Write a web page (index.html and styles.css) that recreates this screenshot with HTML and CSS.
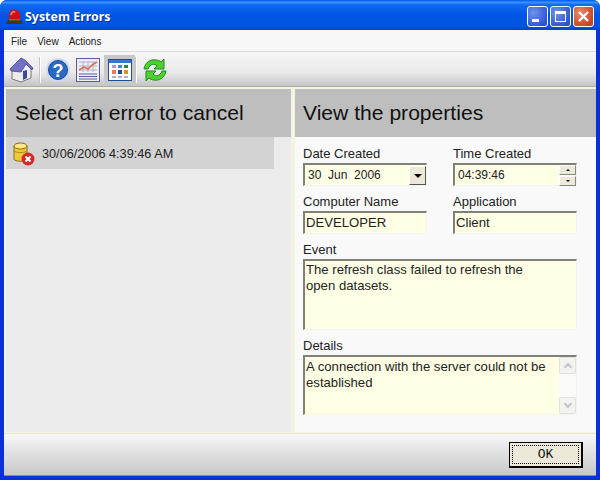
FILE: index.html
```html
<!DOCTYPE html>
<html lang="en">
<head>
    <meta charset="UTF-8">
    <meta name="viewport" content="width=device-width, initial-scale=1.0">
    <title>System Errors</title>
    <link rel="stylesheet" href="styles.css">
</head>
<body>

    <div class="window">
        <div class="titlebar">
            <svg class="title-icon" width="17" height="16" viewBox="0 0 17 16">
                <path d="M3 11V6a5.500 5.500 0 0 1 11 0v5z" fill="#d80c0c"/>
                <path d="M5 6a3 3 0 0 1 4-3" fill="none" stroke="#f88" stroke-width="1.5"/>
                <path d="M0 15l2-4h13l2 4z" fill="#3e3a1c"/>
                <rect x="3" y="10" width="11" height="1.500" fill="#7a7030"/>
            </svg>
            <span class="title-text">System Errors</span>
            <div class="title-buttons">
                <div class="win-btn"><span class="min-glyph"></span></div>
                <div class="win-btn"><span class="max-glyph"></span></div>
                <div class="win-btn close">
                    <svg width="13" height="13" viewBox="0 0 13 13"><path d="M2 2l9 9M11 2l-9 9" stroke="#fff" stroke-width="2.4"/></svg>
                </div>
            </div>
        </div>

        <div class="client">
            <div class="menubar">
                <span>File</span>
                <span>View</span>
                <span>Actions</span>
            </div>

            <div class="toolbar">
                <div class="tool home">
                    <svg width="26" height="26" viewBox="0 0 26 26">
                        <path d="M3 13v9l9 3 10-4V12l-6-6z" fill="#ececee" stroke="#77777c"/>
                        <path d="M12 1L1 12l1 2 10 1 5-8 6 6 1-2-8-8z" fill="#7470c4" stroke="#4a4590" stroke-width="0.8"/>
                        <path d="M14 23v-9l4-1v8z" fill="#3c4a98"/>
                    </svg>
                </div>
                <div class="tool-sep"></div>
                <div class="tool help">
                    <svg width="26" height="26" viewBox="0 0 26 26">
                        <circle cx="13" cy="13" r="12" fill="#cfd9f2"/>
                        <circle cx="13" cy="13" r="9.500" fill="#2a68c8" stroke="#1c4c9c"/>
                        <text x="13" y="19.500" text-anchor="middle" class="help-mark">?</text>
                    </svg>
                </div>
                <div class="tool chart">
                    <svg width="24" height="24" viewBox="0 0 24 24">
                        <rect x="0.5" y="0.5" width="23" height="23" fill="#eeeefa" stroke="#5a5a98"/>
                        <path d="M3 4h18M3 8h18M3 12h18M7 3v11M12 3v11M17 3v11" stroke="#b4b4cc"/>
                        <path d="M3 12l5-3 4 2 4-4 5-3" fill="none" stroke="#e06840" stroke-width="1.5"/>
                        <path d="M3 16h18M3 18.500h18M3 21h18" stroke="#5a5a98"/>
                    </svg>
                </div>
                <div class="tool grid-tool">
                    <svg width="24" height="22" viewBox="0 0 24 22">
                        <rect x="0.5" y="0.5" width="23" height="21" fill="#fff" stroke="#1e4c9c"/>
                        <rect x="1" y="1" width="22" height="3" fill="#3a78d0"/>
                        <rect x="4" y="6" width="4" height="3" fill="#a0a0d0"/>
                        <rect x="10" y="6" width="4" height="3" fill="#2a90e0"/>
                        <rect x="16" y="6" width="4" height="3" fill="#109040"/>
                        <rect x="4" y="11" width="4" height="4" fill="#f07850"/>
                        <rect x="10" y="11" width="4" height="4" fill="#1c4c9c"/>
                        <rect x="16" y="11" width="4" height="4" fill="#d09a10"/>
                        <rect x="4" y="17" width="4" height="2" fill="#b0b0c8"/>
                        <rect x="10" y="17" width="4" height="2" fill="#b0b0c8"/>
                        <rect x="16" y="17" width="4" height="2" fill="#b0b0c8"/>
                    </svg>
                </div>
                <div class="tool-sep"></div>
                <div class="tool refresh">
                    <svg width="26" height="26" viewBox="0 0 26 26">
                        <path d="M2 12C3 5 9 2 14 3c2 0 4 1 5 2l3-3v10h-10l3-3c-3-3-7-2-9 3z" fill="#50d030" stroke="#1c8c1c"/>
                        <path d="M24 14c-1 7-7 10-12 9-2 0-4-1-5-2l-3 3V14h10l-3 3c3 3 7 2 9-3z" fill="#50d030" stroke="#1c8c1c"/>
                    </svg>
                </div>
            </div>

            <div class="panels">
                <div class="panel panel-left">
                    <div class="panel-head">Select an error to cancel</div>
                    <div class="error-row">
                        <svg width="22" height="24" viewBox="0 0 22 24">
                            <path d="M1 4v13c0 3 13 3 13 0V4z" fill="#f0c838" stroke="#8a7010"/>
                            <ellipse cx="7.500" cy="4" rx="6.500" ry="3" fill="#fbe88a" stroke="#8a7010"/>
                            <path d="M1 9c2 2 11 2 13 0" fill="none" stroke="#a88a18"/>
                            <circle cx="15" cy="17" r="6.500" fill="#d8262a"/>
                            <path d="M12.500 14.500l5 5M17.500 14.500l-5 5" stroke="#fff" stroke-width="2"/>
                        </svg>
                        <span>30/06/2006 4:39:46 AM</span>
                    </div>
                </div>

                <div class="panel panel-right">
                    <div class="panel-head">View the properties</div>
                    <div class="form">
                        <div class="field">
                            <label>Date Created</label>
                            <div class="input with-combo">
                                <span class="value date-value">30&nbsp; Jun&nbsp; 2006</span>
                                <div class="combo-btn"></div>
                            </div>
                        </div>
                        <div class="field">
                            <label>Time Created</label>
                            <div class="input with-spin">
                                <span class="value date-value">04:39:46</span>
                                <div class="spin">
                                    <div class="spin-btn"><span class="arrow-up"></span></div>
                                    <div class="spin-btn"><span class="arrow-down"></span></div>
                                </div>
                            </div>
                        </div>
                        <div class="field">
                            <label>Computer Name</label>
                            <div class="input"><span class="value">DEVELOPER</span></div>
                        </div>
                        <div class="field">
                            <label>Application</label>
                            <div class="input"><span class="value">Client</span></div>
                        </div>
                        <div class="field wide">
                            <label>Event</label>
                            <div class="input memo event-memo"><span class="value">The refresh class failed to refresh the<br>open datasets.</span></div>
                        </div>
                        <div class="field wide">
                            <label>Details</label>
                            <div class="input memo details-memo">
                                <span class="value">A connection with the server could not be established</span>
                                <div class="scrollbar">
                                    <div class="scroll-btn"><span class="chev-up"></span></div>
                                    <div class="scroll-btn"><span class="chev-down"></span></div>
                                </div>
                            </div>
                        </div>
                    </div>
                </div>
            </div>

            <div class="footer">
                <button class="ok-btn"><span>OK</span></button>
            </div>
        </div>
    </div>

</body>
</html>
```

FILE: styles.css
```css
html, body {
    margin: 0;
    padding: 0;
}

body {
    width: 600px;
    height: 480px;
    overflow: hidden;
    background-color: #fff;
    font-family: "Liberation Sans", Arial, sans-serif;
    color: #111;
}

.window {
    width: 600px;
    height: 480px;
    box-sizing: border-box;
    display: flex;
    flex-direction: column;
    background-color: #0831d9;
    border-radius: 7px 7px 0 0;
    padding: 0 4px 4px;
}

.titlebar {
    height: 30px;
    flex: none;
    box-sizing: border-box;
    margin: 0 -4px;
    padding: 3px 6px 0 6px;
    display: flex;
    align-items: center;
    border-radius: 7px 7px 0 0;
    background: linear-gradient(to bottom, #0058ee 0%, #3a93ff 8%, #0f6af0 16%, #0055e5 50%, #0054e3 85%, #0043cf 100%);
}

.title-icon {
    flex: none;
}

.title-text {
    margin-left: 2px;
    font-family: "Noto Sans", sans-serif;
    font-size: 12.400px;
    font-weight: bold;
    color: #fff;
    text-shadow: 1px 1px 0 #0f2f90;
}

.title-buttons {
    margin-left: auto;
    display: flex;
    gap: 2px;
}

.win-btn {
    width: 21px;
    height: 21px;
    box-sizing: border-box;
    border: 1px solid #fff;
    border-radius: 3px;
    background: radial-gradient(circle at 30% 30%, #6f92ee, #2a52d0 80%);
    display: flex;
    align-items: center;
    justify-content: center;
}

.win-btn.close {
    background: radial-gradient(circle at 30% 30%, #ea8a68, #c8401c 80%);
}

.min-glyph {
    width: 7px;
    height: 3px;
    background-color: #fff;
    margin: 8px 5px 0 0;
}

.max-glyph {
    width: 9px;
    height: 7px;
    border: 1px solid #fff;
    border-top-width: 3px;
}

.client {
    flex: 1;
    display: flex;
    flex-direction: column;
    min-height: 0;
    background-color: #ece9d8;
}

.menubar {
    height: 22px;
    flex: none;
    box-sizing: border-box;
    padding: 2px 0 0 7px;
    display: flex;
    align-items: center;
    gap: 10px;
    background-color: #f7f7f7;
    border-bottom: 1px solid #dcdcdc;
    font-size: 10px;
    color: #222;
}

.toolbar {
    height: 35px;
    flex: none;
    box-sizing: border-box;
    padding: 1px 0 0 0;
    display: flex;
    align-items: center;
    background: linear-gradient(to bottom, #f6f6f6, #eaeaea 60%, #c4c4c4);
    border-bottom: 1px solid #aaa;
}

.tool {
    height: 30px;
    display: flex;
    align-items: center;
    justify-content: center;
}

.home {
    width: 35px;
}

.help {
    width: 33px;
}

.help-mark {
    font-family: "Liberation Sans", sans-serif;
    font-size: 18px;
    font-weight: bold;
    fill: #fff;
}

.chart {
    width: 28px;
}

.grid-tool {
    width: 31px;
    margin-left: 2px;
    background-color: #c8c8c8;
}

.refresh {
    width: 36px;
}

.tool-sep {
    width: 1px;
    height: 26px;
    background-color: #fff;
    border-left: 1px solid #c4c4c4;
}

.panels {
    flex: 1;
    min-height: 0;
    display: flex;
    background-color: #f1efe2;
}

.panel {
    box-sizing: border-box;
    border: 2px solid #f3f3e0;
    border-bottom: 1px solid #f3f3e0;
}

.panel-left {
    width: 289px;
    background-color: #ebebeb;
}

.panel-right {
    flex: 1;
    background-color: #f9f9f9;
    border-right: 0;
}

.panel-head {
    height: 48px;
    box-sizing: border-box;
    padding: 0 9px;
    display: flex;
    align-items: center;
    background-color: #bebebe;
    font-size: 21.100px;
}

.panel-right .panel-head {
    padding-left: 8px;
}

.error-row {
    height: 32px;
    width: 268px;
    box-sizing: border-box;
    padding: 1px 0 0 7px;
    display: flex;
    align-items: center;
    gap: 7px;
    background-color: #d3d3d3;
    font-size: 12.700px;
    color: #222;
}

.form {
    padding: 9px 18px 0 8px;
    display: grid;
    grid-template-columns: 124px 124px;
    column-gap: 26px;
    row-gap: 8px;
}

.field {
    display: flex;
    flex-direction: column;
}

.field.wide {
    grid-column: 1 / span 2;
}

.field label {
    height: 15px;
    line-height: 15px;
    font-size: 13px;
    color: #222;
    margin-bottom: 2px;
}

.input {
    height: 23px;
    box-sizing: border-box;
    position: relative;
    display: flex;
    align-items: center;
    background-color: #ffffe5;
    border: 1px solid #f4f4e8;
    border-top: 2px solid #808076;
    border-left: 2px solid #808076;
    font-size: 13.150px;
    color: #222;
}

.value {
    padding: 0 0 2px 1px;
}

.date-value {
    padding: 0 0 0 3px;
    font-size: 12px;
}

.with-combo .combo-btn {
    margin-left: auto;
    width: 17px;
    height: 19px;
    box-sizing: border-box;
    background-color: #ece9d8;
    border: 1px solid;
    border-color: #fff #555 #555 #fff;
    position: relative;
}

.combo-btn::after {
    content: "";
    position: absolute;
    left: 4px;
    top: 7px;
    border: 4px solid transparent;
    border-bottom: 0;
    border-top: 4px solid #000;
}

.spin {
    margin-left: auto;
    width: 17px;
    height: 21px;
    display: flex;
    flex-direction: column;
    gap: 1px;
}

.spin-btn {
    flex: 1;
    box-sizing: border-box;
    background-color: #ece9d8;
    border: 1px solid;
    border-color: #fff #888 #888 #fff;
    display: flex;
    align-items: center;
    justify-content: center;
}

.arrow-up {
    border: 2px solid transparent;
    border-top: 0;
    border-bottom: 2px solid #000;
}

.arrow-down {
    border: 2px solid transparent;
    border-bottom: 0;
    border-top: 2px solid #000;
}

.memo {
    align-items: flex-start;
    line-height: 16px;
    padding-top: 1px;
}

.event-memo {
    height: 71px;
}

.details-memo {
    height: 60px;
    padding-top: 2px;
    padding-right: 18px;
}

.scrollbar {
    position: absolute;
    top: 0;
    right: 0;
    bottom: 0;
    width: 17px;
    display: flex;
    flex-direction: column;
    justify-content: space-between;
    background-color: #fafaf8;
}

.scroll-btn {
    height: 17px;
    box-sizing: border-box;
    background-color: #f3f3f0;
    border: 1px solid #e2e2dc;
    border-radius: 2px;
    display: flex;
    align-items: center;
    justify-content: center;
}

.chev-up,
.chev-down {
    width: 4px;
    height: 4px;
    border-left: 2px solid #c4c4c8;
    border-top: 2px solid #c4c4c8;
    transform: rotate(45deg);
    margin-top: 3px;
}

.chev-down {
    transform: rotate(225deg);
    margin-top: -3px;
}

.footer {
    height: 43px;
    flex: none;
    box-sizing: border-box;
    padding: 8px 13px 0 0;
    display: flex;
    justify-content: flex-end;
    align-items: flex-start;
    background: linear-gradient(to bottom, #f7f7f7, #c8c8c8);
    border-top: 1px solid #e8e8d0;
    border-bottom: 1px solid #8a8a8a;
}

.ok-btn {
    width: 74px;
    height: 26px;
    padding: 2px;
    box-sizing: border-box;
    background-color: #ece9d8;
    border: 1px solid #000;
    border-right-width: 2px;
    border-bottom-width: 2px;
    font-family: "Liberation Mono", monospace;
    font-size: 13px;
    color: #111;
}

.ok-btn span {
    display: flex;
    align-items: center;
    justify-content: center;
    height: 100%;
    border: 1px dotted #000;
    box-sizing: border-box;
}
```
